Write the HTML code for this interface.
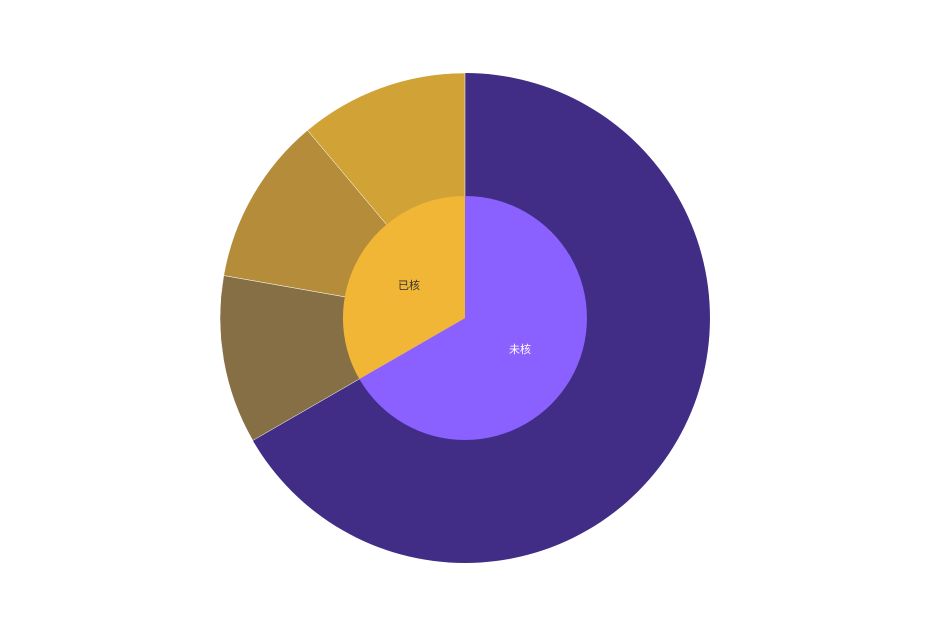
<!DOCTYPE html>
<html><head><meta charset="utf-8"><style>
html,body{margin:0;padding:0;background:#fff;width:930px;height:633px;overflow:hidden}
</style></head><body>
<svg width="930" height="633" viewBox="0 0 930 633" xmlns="http://www.w3.org/2000/svg">
<path d="M465 318 L465 73 A245 245 0 1 1 252.8 440.5 Z" fill="#412d86"/>
<path d="M465 318 L252.8 440.5 A245 245 0 0 1 223.7 275.5 Z" fill="#866e45" stroke="#fff" stroke-width="0.5"/>
<path d="M465 318 L223.7 275.5 A245 245 0 0 1 307.5 130.3 Z" fill="#b58c3a" stroke="#fff" stroke-width="0.5"/>
<path d="M465 318 L307.5 130.3 A245 245 0 0 1 465 73 Z" fill="#d1a235" stroke="#fff" stroke-width="0.5"/>
<path d="M465 318 L465 196 A122 122 0 1 1 359.3 379 Z" fill="#8a60fe"/>
<path d="M465 318 L359.3 379 A122 122 0 0 1 465 196 Z" fill="#f2b636"/>
<text x="409" y="289" font-size="11" text-anchor="middle" fill="#333" font-family="Liberation Sans, Noto Sans CJK SC, sans-serif">已核</text>
<text x="520" y="353" font-size="11" text-anchor="middle" fill="#fff" font-family="Liberation Sans, Noto Sans CJK SC, sans-serif">未核</text>
</svg>
</body></html>
